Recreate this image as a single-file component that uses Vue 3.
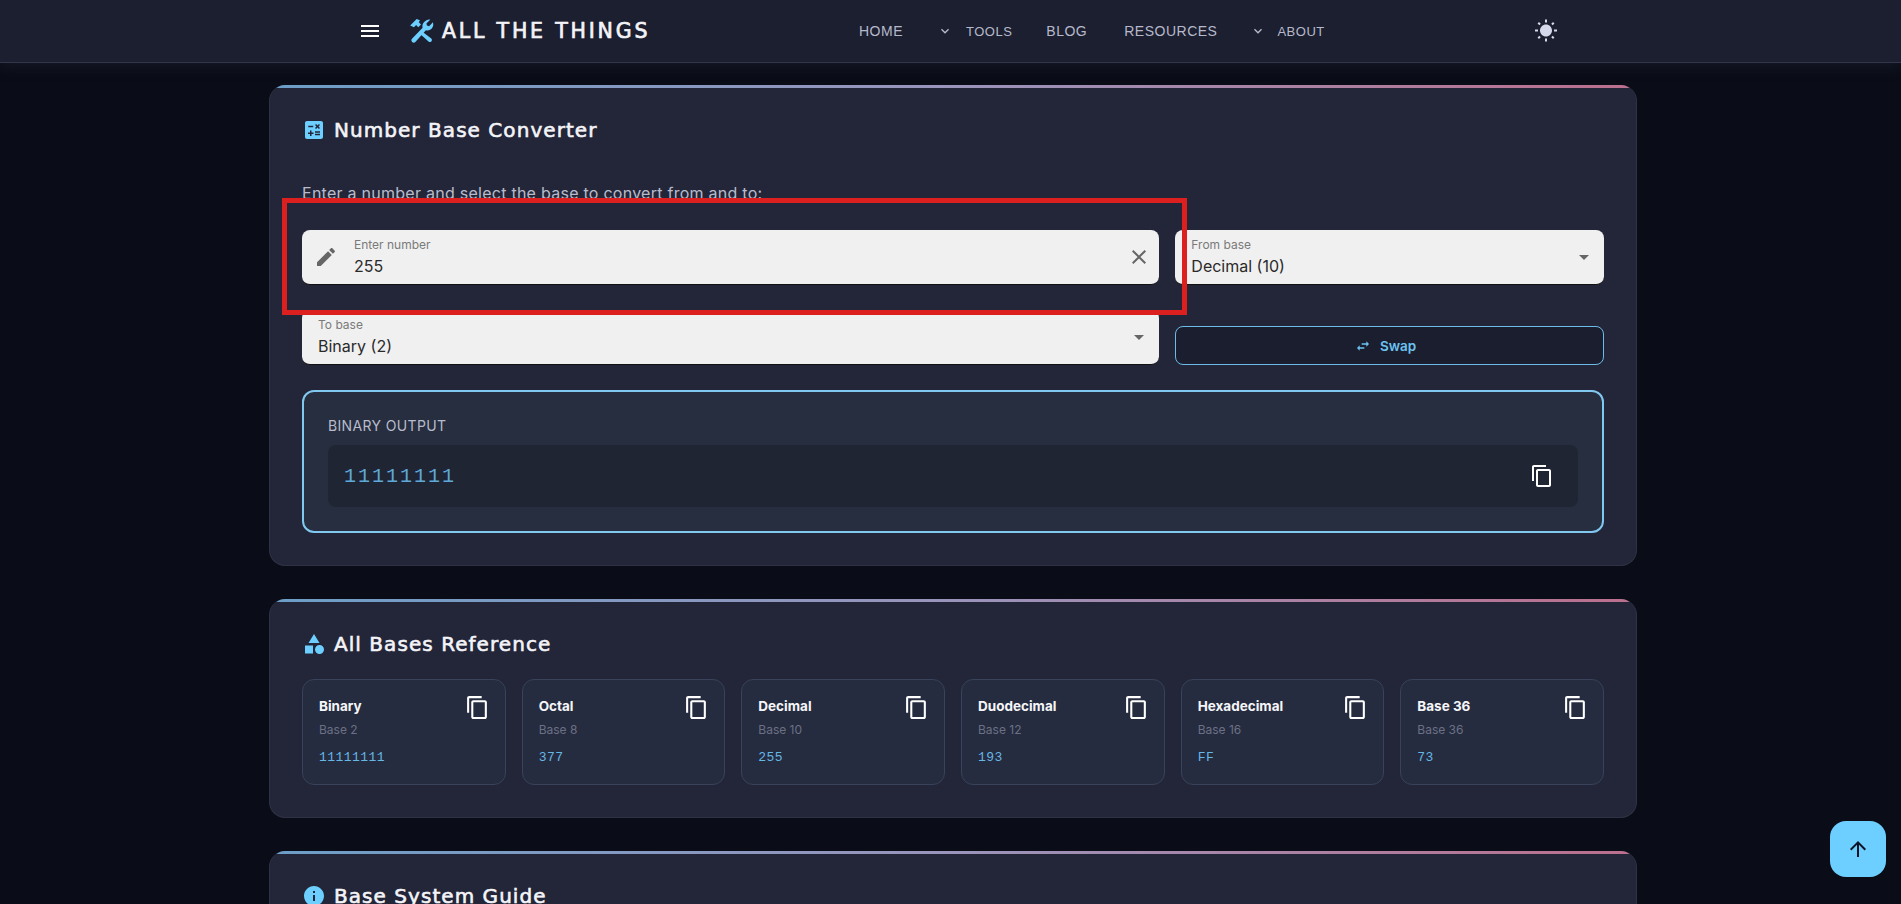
<script setup>
const icons = {
  menu: 'M3 18h18v-2H3v2zm0-5h18v-2H3v2zm0-7v2h18V6H3z',
  tools: 'M20.5 1.5l-3.5 3.5.5 2 2 .5 3.5-3.5c.8 2.5.2 4.7-1.5 6.2-1.5 1.3-3.3 1.6-5 1L7 22c-1 1-2.3 1-3.2.2-.9-1-.9-2.2.1-3.2L13.5 9c-.5-1.8-.1-3.6 1.2-5 1.6-1.6 3.7-3 5.8-2.5zM2 7l6-6 3 1-1 2 2 2-2.5 2.5-2-2-2 2zM13 12.5l8.5 6.5c.8.8.8 1.8 0 2.6s-1.8.8-2.6 0L11 14.5z',
  chevron: 'M7.41 8.59L12 13.17l4.59-4.58L18 10l-6 6-6-6z',
  sun: 'M6.76 4.84l-1.8-1.79-1.41 1.41 1.79 1.79 1.42-1.41zM4 10.5H1v2h3v-2zm9-9.95h-2V3.5h2V.55zm7.45 3.91l-1.41-1.41-1.79 1.79 1.41 1.41 1.79-1.79zm-3.21 13.7l1.79 1.8 1.41-1.41-1.8-1.79-1.4 1.4zM20 10.5v2h3v-2h-3zm-8-5c-3.31 0-6 2.69-6 6s2.69 6 6 6 6-2.69 6-6-2.69-6-6-6zm-1 16.95h2V19.5h-2v2.95zm-7.45-3.91l1.41 1.41 1.79-1.8-1.41-1.41-1.79 1.8z',
  calc: 'M19 3H5c-1.1 0-2 .9-2 2v14c0 1.1.9 2 2 2h14c1.1 0 2-.9 2-2V5c0-1.1-.9-2-2-2zm-5.97 4.06L14.09 6l1.41 1.41L16.91 6l1.06 1.06-1.41 1.41 1.41 1.41-1.06 1.06-1.41-1.4-1.41 1.41-1.06-1.06 1.41-1.41-1.41-1.42zm-6.78.66h5v1.5h-5v-1.5zM11.5 16h-2v2H8v-2H6v-1.5h2v-2h1.5v2h2V16zm6.5 1.25h-5v-1.5h5v1.5zm0-2.5h-5v-1.5h5v1.5z',
  category: 'M12 2l-5.5 9h11zM17.5 13a4.5 4.5 0 1 0 0 9 4.5 4.5 0 0 0 0-9zM3 13.5h8v8H3z',
  info: 'M12 2C6.48 2 2 6.48 2 12s4.48 10 10 10 10-4.48 10-10S17.52 2 12 2zm1 15h-2v-6h2v6zm0-8h-2V7h2v2z',
  edit: 'M3 17.25V21h3.75L17.81 9.94l-3.75-3.75L3 17.25zM20.71 7.04c.39-.39.39-1.02 0-1.41l-2.34-2.34c-.39-.39-1.02-.39-1.41 0l-1.83 1.83 3.75 3.75 1.83-1.83z',
  close: 'M19 6.41L17.59 5 12 10.59 6.41 5 5 6.41 10.59 12 5 17.59 6.41 19 12 13.41 17.59 19 19 17.59 13.41 12z',
  copy: 'M16 1H4c-1.1 0-2 .9-2 2v14h2V3h12V1zm3 4H8c-1.1 0-2 .9-2 2v14c0 1.1.9 2 2 2h11c1.1 0 2-.9 2-2V7c0-1.1-.9-2-2-2zm0 16H8V7h11v14z',
  swap: 'M6.99 11L3 15l3.99 4v-3H14v-2H6.99v-3zM21 9l-3.99-4v3H10v2h7.01v3L21 9z',
  up: 'M4 12l1.41 1.41L11 7.83V20h2V7.83l5.58 5.59L20 12l-8-8-8 8z',
  drop: 'M7 10l5 5 5-5z'
}
const bases = [
  { name: 'Binary', base: 'Base 2', value: '11111111' },
  { name: 'Octal', base: 'Base 8', value: '377' },
  { name: 'Decimal', base: 'Base 10', value: '255' },
  { name: 'Duodecimal', base: 'Base 12', value: '193' },
  { name: 'Hexadecimal', base: 'Base 16', value: 'FF' },
  { name: 'Base 36', base: 'Base 36', value: '73' }
]
</script>

<template>
  <div class="page">
    <header class="topbar">
      <svg class="menu" viewBox="0 0 24 24"><path :d="icons.menu" /></svg>
      <svg class="logo" viewBox="0 0 24 24"><path :d="icons.tools" /></svg>
      <span class="brand">ALL THE THINGS</span>
      <nav class="nav">
        <a class="home">HOME</a>
        <a class="drop tools"><svg viewBox="0 0 24 24"><path :d="icons.chevron" /></svg>TOOLS</a>
        <a class="blog">BLOG</a>
        <a class="resources">RESOURCES</a>
        <a class="drop"><svg viewBox="0 0 24 24"><path :d="icons.chevron" /></svg>ABOUT</a>
      </nav>
      <svg class="sun" viewBox="0 0 24 24"><path :d="icons.sun" /></svg>
    </header>

    <main class="main">
      <section class="card">
        <h2 class="title first"><svg viewBox="0 0 24 24"><path :d="icons.calc" /></svg>Number Base Converter</h2>
        <p class="intro">Enter a number and select the base to convert from and to:</p>
        <div class="form">
          <div class="field with-icon">
            <svg class="lead" viewBox="0 0 24 24"><path :d="icons.edit" /></svg>
            <div class="field-text"><label>Enter number</label><span>255</span></div>
            <svg class="trail" viewBox="0 0 24 24"><path :d="icons.close" /></svg>
          </div>
          <div class="field">
            <div class="field-text"><label>From base</label><span>Decimal (10)</span></div>
            <svg class="arrow" viewBox="0 0 24 24"><path :d="icons.drop" /></svg>
          </div>
          <div class="field">
            <div class="field-text"><label>To base</label><span>Binary (2)</span></div>
            <svg class="arrow" viewBox="0 0 24 24"><path :d="icons.drop" /></svg>
          </div>
          <button class="swap"><svg viewBox="0 0 24 24"><path :d="icons.swap" /></svg>Swap</button>
        </div>
        <div class="result">
          <div class="result-label">BINARY OUTPUT</div>
          <div class="result-value">
            <span>11111111</span>
            <svg viewBox="0 0 24 24"><path :d="icons.copy" /></svg>
          </div>
        </div>
      </section>

      <section class="card">
        <h2 class="title"><svg viewBox="0 0 24 24"><path :d="icons.category" /></svg>All Bases Reference</h2>
        <div class="bases">
          <div v-for="b in bases" :key="b.name" class="base">
            <div class="base-text">
              <div class="base-name">{{ b.name }}</div>
              <div class="base-sub">{{ b.base }}</div>
              <div class="base-value">{{ b.value }}</div>
            </div>
            <svg viewBox="0 0 24 24"><path :d="icons.copy" /></svg>
          </div>
        </div>
      </section>

      <section class="card">
        <h2 class="title"><svg viewBox="0 0 24 24"><path :d="icons.info" /></svg>Base System Guide</h2>
      </section>
    </main>

    <button class="totop"><svg viewBox="0 0 24 24"><path :d="icons.up" /></svg></button>
    <div class="annotation"></div>
  </div>
</template>

<style>
html, body { margin: 0; background: #0a0d17; overflow: hidden; }
</style>

<style scoped>
.page {
  position: relative;
  width: 1901px;
  height: 904px;
  overflow: hidden;
  background: #0a0d17;
  font-family: "Inter", "Noto Sans", sans-serif;
  color: #e8e8f0;
}
svg { fill: currentColor; display: block; flex: none; }

.topbar {
  position: relative;
  z-index: 2;
  display: flex;
  align-items: center;
  height: 62px;
  box-sizing: content-box;
  padding-left: 358px;
  background: #1c1f2f;
  border-bottom: 1px solid #33364a;
  box-shadow: 0 2px 14px rgba(40, 44, 62, 0.45);
  color: #fff;
}
.menu { width: 24px; height: 24px; margin-right: 26px; }
.logo { width: 26px; height: 26px; color: #6dcfff; margin-right: 8px; }
.brand {
  font-family: "DejaVu Sans", sans-serif;
  font-weight: 400;
  font-size: 20.5px;
  letter-spacing: 2.8px;
  -webkit-text-stroke: 0.7px #f4f4f8;
  color: #f4f4f8;
  width: 210px;
  white-space: nowrap;
}
.nav {
  display: flex;
  align-items: center;
  margin-left: 207px;
  font-family: "Liberation Sans", sans-serif;
  font-size: 14px;
  letter-spacing: 0.5px;
  color: #b6b9cc;
  width: 686px;
}
.nav a { display: flex; align-items: center; white-space: nowrap; }
.nav .drop { font-size: 13px; }
.nav .drop svg { width: 16px; height: 16px; margin-right: 11px; }
.nav .tools svg { margin-right: 13px; }
.home { margin-right: 34px; }
.tools { margin-right: 34px; }
.blog { margin-right: 37px; }
.resources { margin-right: 33px; }
.sun { width: 24px; height: 24px; color: #d5d8ea; margin-left: -11px; }

.main {
  padding: 22px 264px 0 269px;
  display: flex;
  flex-direction: column;
  gap: 33px;
}
.card {
  background: #232638;
  border-radius: 16px;
  border: 1px solid #2f3244;
  border-top: 0;
  padding: 0 32px 32px;
  position: relative;
  overflow: hidden;
  box-sizing: border-box;
}
.card::before {
  content: "";
  position: absolute;
  left: 0;
  right: 0;
  top: 0;
  height: 3px;
  background: linear-gradient(90deg, #6c9ec7, #9a94bb 50%, #bb6f8d);
}
.title {
  margin: 0;
  padding-top: 33px;
  display: flex;
  align-items: center;
  height: 24px;
  box-sizing: content-box;
  font-family: "DejaVu Sans", sans-serif;
  font-weight: 400;
  font-size: 20px;
  letter-spacing: 1.05px;
  -webkit-text-stroke: 0.6px #f4f4f8;
  color: #f4f4f8;
  white-space: nowrap;
}
.title svg { width: 24px; height: 24px; color: #6dcfff; margin-right: 8px; }
.intro {
  margin: 42px 0 0;
  height: 19px;
  line-height: 19px;
  font-size: 16px;
  color: #b8bbcb;
  letter-spacing: 0.26px;
}
.form {
  margin-top: 27px;
  display: grid;
  grid-template-columns: 2fr 1fr;
  column-gap: 16px;
  row-gap: 25px;
}
.field {
  height: 55px;
  box-sizing: border-box;
  background: #f0f0f0;
  border-radius: 8px;
  border-bottom: 1px solid #111;
  display: flex;
  align-items: center;
  padding: 0 16px;
  color: #222;
}
.with-icon { padding-left: 12px; }
.lead { width: 24px; height: 24px; color: #666; margin-right: 16px; }
.trail { width: 24px; height: 24px; color: #666; margin-right: -8px; }
.arrow { width: 24px; height: 24px; color: #666; margin-right: -8px; }
.field-text { flex: 1; display: flex; flex-direction: column; gap: 1px; }
.field-text label { font-size: 12px; line-height: 16px; color: #7a7a7a; }
.field-text span { font-size: 16px; line-height: 24px; color: #2a2a2a; }
.swap {
  align-self: end;
  height: 39px;
  border: 1px solid #6dbbe8;
  border-radius: 8px;
  background: #1b1e2e;
  color: #6cc3f2;
  font-family: inherit;
  font-size: 13.5px;
  font-weight: 600;
  display: flex;
  align-items: center;
  justify-content: center;
  gap: 9px;
  padding: 0 8px 0 0;
}
.swap svg { width: 16px; height: 16px; }
.result {
  margin-top: 25px;
  height: 143px;
  box-sizing: border-box;
  border: 2px solid #80c8f0;
  border-radius: 12px;
  background: #262e40;
  padding: 24px 24px 0;
}
.result-label {
  font-size: 14px;
  line-height: 20px;
  letter-spacing: 0.35px;
  color: #b8bbcb;
}
.result-value {
  margin-top: 9px;
  height: 62px;
  background: #1f2533;
  border-radius: 8px;
  display: flex;
  align-items: center;
  justify-content: space-between;
  padding: 0 16px;
  color: #fff;
}
.result-value span {
  font-family: "Liberation Mono", monospace;
  font-size: 20px;
  letter-spacing: 2px;
  color: #5fa9d8;
}
.result-value svg { width: 24px; height: 24px; margin-right: 8px; }
.bases {
  margin-top: 23px;
  display: grid;
  grid-template-columns: repeat(6, 1fr);
  gap: 16px;
}
.base {
  height: 106px;
  box-sizing: border-box;
  background: #252c3f;
  border: 1px solid #38425a;
  border-radius: 12px;
  padding: 17px 16px;
  display: flex;
  justify-content: space-between;
  color: #fff;
}
.base svg { width: 25px; height: 25px; margin-top: -2px; margin-right: -1px; }
.base-name { font-size: 13.5px; font-weight: 700; line-height: 18px; color: #f6f6fa; }
.base-sub { font-size: 12px; line-height: 16px; margin-top: 7px; color: #6c7085; }
.base-value {
  font-family: "Liberation Mono", monospace;
  font-size: 13px;
  line-height: 16px;
  margin-top: 12px;
  letter-spacing: 0.45px;
  color: #66b6e6;
}
.totop {
  position: absolute;
  left: 1830px;
  top: 821px;
  width: 56px;
  height: 56px;
  border: 0;
  border-radius: 16px;
  background: #6dcfff;
  color: #0b1426;
  padding: 16px;
}
.totop svg { width: 24px; height: 24px; }
.annotation {
  position: absolute;
  left: 282px;
  top: 198px;
  width: 905px;
  height: 117px;
  box-sizing: border-box;
  border: 5px solid #dc2020;
  pointer-events: none;
}
</style>
